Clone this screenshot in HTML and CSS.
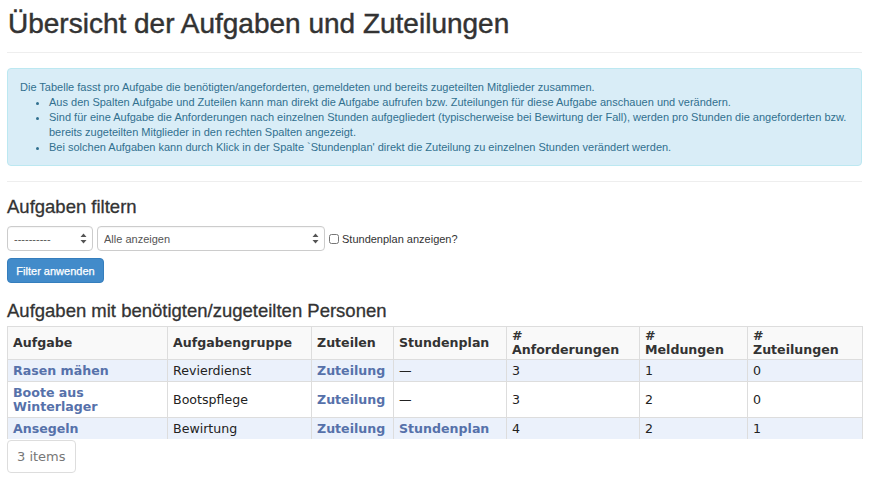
FILE: index.html
```html
<!DOCTYPE html>
<html lang="de">
<head>
<meta charset="utf-8">
<title>Übersicht der Aufgaben und Zuteilungen</title>
<link rel="stylesheet" href="styles.css">
</head>
<body>
<div class="page">
  <h1 class="title">Übersicht der Aufgaben und Zuteilungen</h1>
  <hr class="rule">
  <div class="alert">
    Die Tabelle fasst pro Aufgabe die benötigten/angeforderten, gemeldeten und bereits zugeteilten Mitglieder zusammen.
    <ul class="alert-list">
      <li>Aus den Spalten Aufgabe und Zuteilen kann man direkt die Aufgabe aufrufen bzw. Zuteilungen für diese Aufgabe anschauen und verändern.</li>
      <li>Sind für eine Aufgabe die Anforderungen nach einzelnen Stunden aufgegliedert (typischerweise bei Bewirtung der Fall), werden pro Stunden die angeforderten bzw. bereits zugeteilten Mitglieder in den rechten Spalten angezeigt.</li>
      <li>Bei solchen Aufgaben kann durch Klick in der Spalte `Stundenplan' direkt die Zuteilung zu einzelnen Stunden verändert werden.</li>
    </ul>
  </div>
  <hr class="rule rule-2">

  <h2 class="section-title">Aufgaben filtern</h2>
  <form class="filter">
    <div class="filter-row">
      <span class="select-wrap select-small">
        <select class="select"><option>----------</option></select>
        <svg class="select-arrows" width="7" height="11" viewBox="0 0 7 11"><path d="M3.5 0.5 L6.5 4 L0.5 4 Z M3.5 10.5 L6.5 7 L0.5 7 Z" fill="#555"/></svg>
      </span>
      <span class="select-wrap select-large">
        <select class="select"><option>Alle anzeigen</option></select>
        <svg class="select-arrows" width="7" height="11" viewBox="0 0 7 11"><path d="M3.5 0.5 L6.5 4 L0.5 4 Z M3.5 10.5 L6.5 7 L0.5 7 Z" fill="#555"/></svg>
      </span>
      <label class="check-label"><input type="checkbox" class="check"> Stundenplan anzeigen?</label>
    </div>
    <button type="button" class="btn">Filter anwenden</button>
  </form>

  <h2 class="section-title section-title-2">Aufgaben mit benötigten/zugeteilten Personen</h2>
  <table class="tasks">
    <thead>
      <tr>
        <th class="c-task">Aufgabe</th>
        <th class="c-group">Aufgabengruppe</th>
        <th class="c-assign">Zuteilen</th>
        <th class="c-plan">Stundenplan</th>
        <th class="c-req">#<br>Anforderungen</th>
        <th class="c-msg">#<br>Meldungen</th>
        <th class="c-alloc">#<br>Zuteilungen</th>
      </tr>
    </thead>
    <tbody>
      <tr class="odd">
        <td><a href="#">Rasen mähen</a></td>
        <td>Revierdienst</td>
        <td><a href="#">Zuteilung</a></td>
        <td>—</td>
        <td>3</td>
        <td>1</td>
        <td>0</td>
      </tr>
      <tr>
        <td><a href="#">Boote aus Winterlager</a></td>
        <td>Bootspflege</td>
        <td><a href="#">Zuteilung</a></td>
        <td>—</td>
        <td>3</td>
        <td>2</td>
        <td>0</td>
      </tr>
      <tr class="odd">
        <td><a href="#">Ansegeln</a></td>
        <td>Bewirtung</td>
        <td><a href="#">Zuteilung</a></td>
        <td><a href="#">Stundenplan</a></td>
        <td>4</td>
        <td>2</td>
        <td>1</td>
      </tr>
    </tbody>
  </table>
  <div class="pager"><span class="pager-item">3 items</span></div>
</div>
</body>
</html>
```

FILE: styles.css
```css
* { box-sizing: border-box; }

body {
  margin: 0;
  background: #fff;
  color: #333;
  font-family: "Liberation Sans", Arial, sans-serif;
}

.page {
  padding: 0 13px 0 7px;
}

.title {
  margin: 0;
  padding-top: 8px;
  padding-left: 1px;
  font-size: 28px;
  line-height: 32px;
  font-weight: 500;
  color: #333;
  -webkit-text-stroke: 0.45px #333;
}

.rule {
  border: 0;
  border-top: 1px solid #eee;
  margin: 12px 0 15px;
}

.rule-2 {
  margin: 15px 0 14px;
}

.alert {
  background: #d9edf7;
  border: 1px solid #bce8f1;
  border-radius: 4px;
  color: #31708f;
  font-size: 11px;
  line-height: 15px;
  padding: 11px 12px 10px;
}

.alert-list {
  margin: 0;
  padding-left: 29px;
}

.section-title {
  margin: 0;
  font-size: 18.5px;
  line-height: 22px;
  font-weight: 500;
  color: #333;
  -webkit-text-stroke: 0.3px #333;
}

.section-title-2 {
  margin-top: 17px;
}

.filter {
  margin-top: 8px;
}

.filter-row {
  display: flex;
  align-items: center;
  gap: 4px;
}

.select-wrap {
  position: relative;
  display: block;
  height: 25px;
}

.select-small { width: 86px; }
.select-large { width: 228px; }

.select {
  -webkit-appearance: none;
  appearance: none;
  width: 100%;
  height: 25px;
  border: 1px solid #ccc;
  border-radius: 4px;
  background: #fff;
  color: #555;
  font-family: "Liberation Sans", Arial, sans-serif;
  font-size: 11px;
  padding: 0 6px;
  box-shadow: inset 0 1px 1px rgba(0,0,0,0.04);
}

.select-arrows {
  position: absolute;
  right: 6px;
  top: 7px;
}

.check-label {
  display: flex;
  align-items: center;
  gap: 3px;
  font-size: 11px;
  color: #333;
}

.check {
  margin: 0;
  width: 10px;
  height: 10px;
}

.btn {
  margin-top: 7px;
  display: block;
  width: 97px;
  height: 25px;
  background: #428bca;
  border: 1px solid #357ebd;
  border-radius: 4px;
  color: #fff;
  font-family: "Liberation Sans", Arial, sans-serif;
  font-size: 11px;
  -webkit-text-stroke: 0.25px #fff;
  padding: 0;
}

.tasks {
  margin-top: 4px;
  width: 855px;
  table-layout: fixed;
  border-collapse: collapse;
  font-family: "DejaVu Sans", Verdana, sans-serif;
  font-size: 12.6px;
  line-height: 14px;
  color: #222;
}

.tasks th, .tasks td {
  border: 1px solid #ddd;
  text-align: left;
  vertical-align: middle;
  padding: 4px 5px 3px;
}

.tasks th {
  background: #f9f9f9;
  color: #333;
  font-weight: bold;
  padding: 2px 5px 2px;
}

.tasks td {
  border-bottom: 0;
}

.tasks tr.odd td {
  background: #ebf1fb;
}

.tasks a {
  color: #5671aa;
  font-weight: bold;
  text-decoration: none;
}

.c-task { width: 160px; }
.c-group { width: 144px; }
.c-assign { width: 82px; }
.c-plan { width: 113px; }
.c-req { width: 133px; }
.c-msg { width: 108px; }
.c-alloc { width: 115px; }

.pager {
  display: flex;
  margin-top: 1px;
}

.pager-item {
  display: block;
  border: 1px solid #ddd;
  border-radius: 4px;
  padding: 0 9px;
  height: 33px;
  line-height: 31px;
  font-family: "DejaVu Sans", Verdana, sans-serif;
  font-size: 13px;
  color: #777;
}
```
